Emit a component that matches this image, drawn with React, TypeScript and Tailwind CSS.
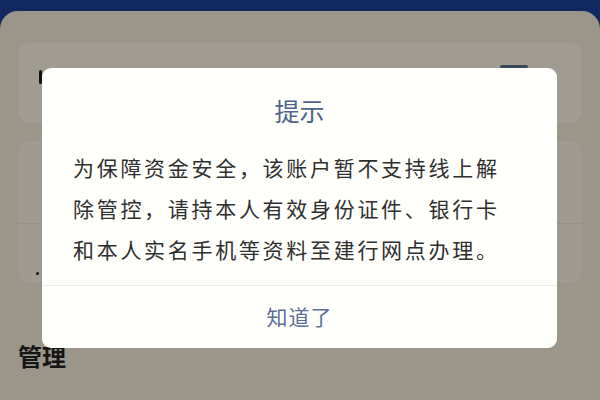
import React from 'react';

const cjk = { fontFamily: '"Noto Sans CJK SC", "Noto Sans", sans-serif' };

const lines = [
  '为保障资金安全，该账户暂不支持线上解',
  '除管控，请持本人有效身份证件、银行卡',
  '和本人实名手机等资料至建行网点办理。',
];

export default function App() {
  return (
    <div className="relative w-[600px] h-[400px] overflow-hidden bg-[#10275f]" style={cjk}>
      {/* dimmed page behind the dialog */}
      <div className="mt-[11px] h-[389px] rounded-t-[18px] bg-[#9c968a] px-[18px] pt-[32px]">
        <div className="h-[80px] rounded-[12px] bg-[#a19c91] flex justify-between pl-[21px] pr-[54px]">
          <span className="mt-[27px] h-[14px] w-[3px] rounded-sm bg-[#141414]" />
          <span className="mt-[22px] h-[3px] w-[28px] rounded-full bg-[#3b4a5a]" />
        </div>
        <div className="mt-[18px] h-[142px] rounded-[12px] bg-[#a09b90] flex flex-col">
          <div className="h-[83px] border-b border-[#968f84]" />
          <div className="flex-1 flex items-end pl-[18px] pb-[8px]">
            <span className="h-[3px] w-[3px] rounded-full bg-[#111]" />
          </div>
        </div>
        <div className="mt-[58px] text-[24px] font-bold leading-[30px] text-[#151515]">管理</div>
      </div>

      {/* dialog */}
      <div className="absolute left-[42px] top-[68px] w-[515px] rounded-[9px] bg-[#fffffc]">
        <div className="pt-[26px] text-center text-[25px] leading-[32px] text-[#4f6388]">提示</div>
        <div className="mt-[21px] px-[31px] pb-[15px] text-[21px] leading-[41px] tracking-[2.7px] text-[#2f2f2f]">
          {lines.map((l) => (
            <div key={l} className="whitespace-nowrap">{l}</div>
          ))}
        </div>
        <div className="border-t border-[#ecebe6] h-[63px] flex items-center justify-center text-[21px] tracking-[1px] text-[#5a6e93]">
          知道了
        </div>
      </div>
    </div>
  );
}
